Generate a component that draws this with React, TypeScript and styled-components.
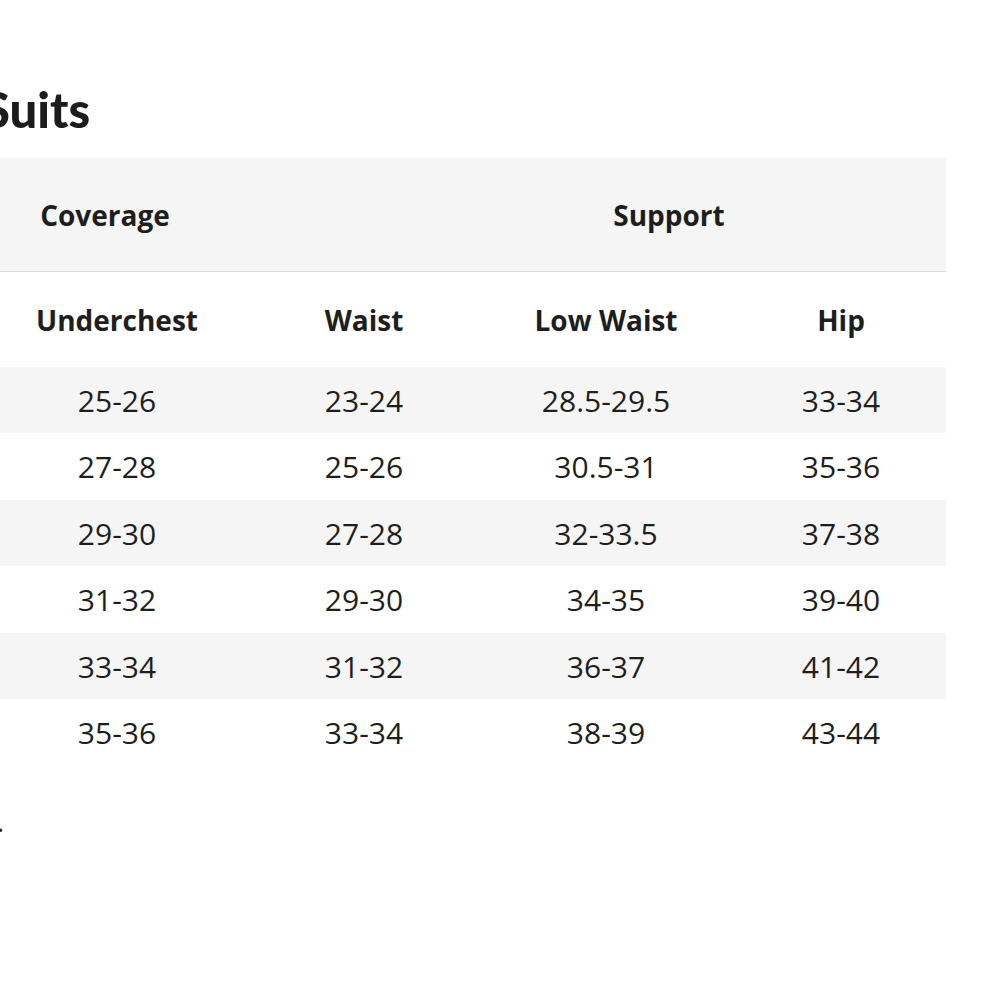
import React from "react";
import styled, { createGlobalStyle } from "styled-components";

const Global = createGlobalStyle`
  html, body { margin: 0; padding: 0; background: #ffffff; overflow: hidden; }
  body { font-family: "Open Sans", "Lato", sans-serif; color: #1f1f1f; }
`;

const Page = styled.div`
  width: 1000px;
  height: 1000px;
  overflow: hidden;
  padding-top: 85px;
  box-sizing: border-box;
`;

const Title = styled.h1`
  margin: 0 0 25px -17px;
  font-family: "Lato", "Open Sans", sans-serif;
  font-size: 49px;
  line-height: 48px;
  font-weight: 900;
  color: #1c1c1c;
`;

const Table = styled.div`
  margin-left: -182px;
  width: 1128px;
`;

const GroupRow = styled.div`
  display: grid;
  grid-template-columns: 574px 554px;
  height: 113px;
  background: #f5f5f5;
  border-bottom: 1px solid #dcdcdc;
`;

const cols = "164px 270px 224px 260px 210px";

const Row = styled.div<{ $shade?: boolean; $h: number }>`
  display: grid;
  grid-template-columns: ${cols};
  height: ${(p) => p.$h}px;
  background: ${(p) => (p.$shade ? "#f5f5f5" : "#ffffff")};
`;

const Cell = styled.div<{ $bold?: boolean }>`
  display: flex;
  align-items: center;
  justify-content: center;
  font-size: ${(p) => (p.$bold ? "28px" : "30px")};
  font-weight: ${(p) => (p.$bold ? 700 : 400)};
  color: #1e1e1e;
  white-space: nowrap;
`;

const Note = styled.p`
  margin: 38px 0 0 -800px;
  width: 804px;
  text-align: right;
  font-size: 28px;
  line-height: 34px;
  color: #1e1e1e;
  white-space: nowrap;
`;

const headers = ["Size", "Underchest", "Waist", "Low Waist", "Hip"];
const rows = [
  ["XS", "25-26", "23-24", "28.5-29.5", "33-34"],
  ["S", "27-28", "25-26", "30.5-31", "35-36"],
  ["M", "29-30", "27-28", "32-33.5", "37-38"],
  ["L", "31-32", "29-30", "34-35", "39-40"],
  ["XL", "33-34", "31-32", "36-37", "41-42"],
  ["XXL", "35-36", "33-34", "38-39", "43-44"],
];

export default function App() {
  return (
    <Page>
      <Global />
      <Title>Suits</Title>
      <Table>
        <GroupRow>
          <Cell $bold>Coverage</Cell>
          <Cell $bold>Support</Cell>
        </GroupRow>
        <Row $h={95}>
          {headers.map((h) => (
            <Cell key={h} $bold>
              {h}
            </Cell>
          ))}
        </Row>
        {rows.map((r, i) => (
          <Row key={i} $h={i % 2 === 0 ? 66 : 67} $shade={i % 2 === 0}>
            {r.map((v, j) => (
              <Cell key={j}>{v}</Cell>
            ))}
          </Row>
        ))}
      </Table>
      <Note>All measurements are in inches.</Note>
    </Page>
  );
}
